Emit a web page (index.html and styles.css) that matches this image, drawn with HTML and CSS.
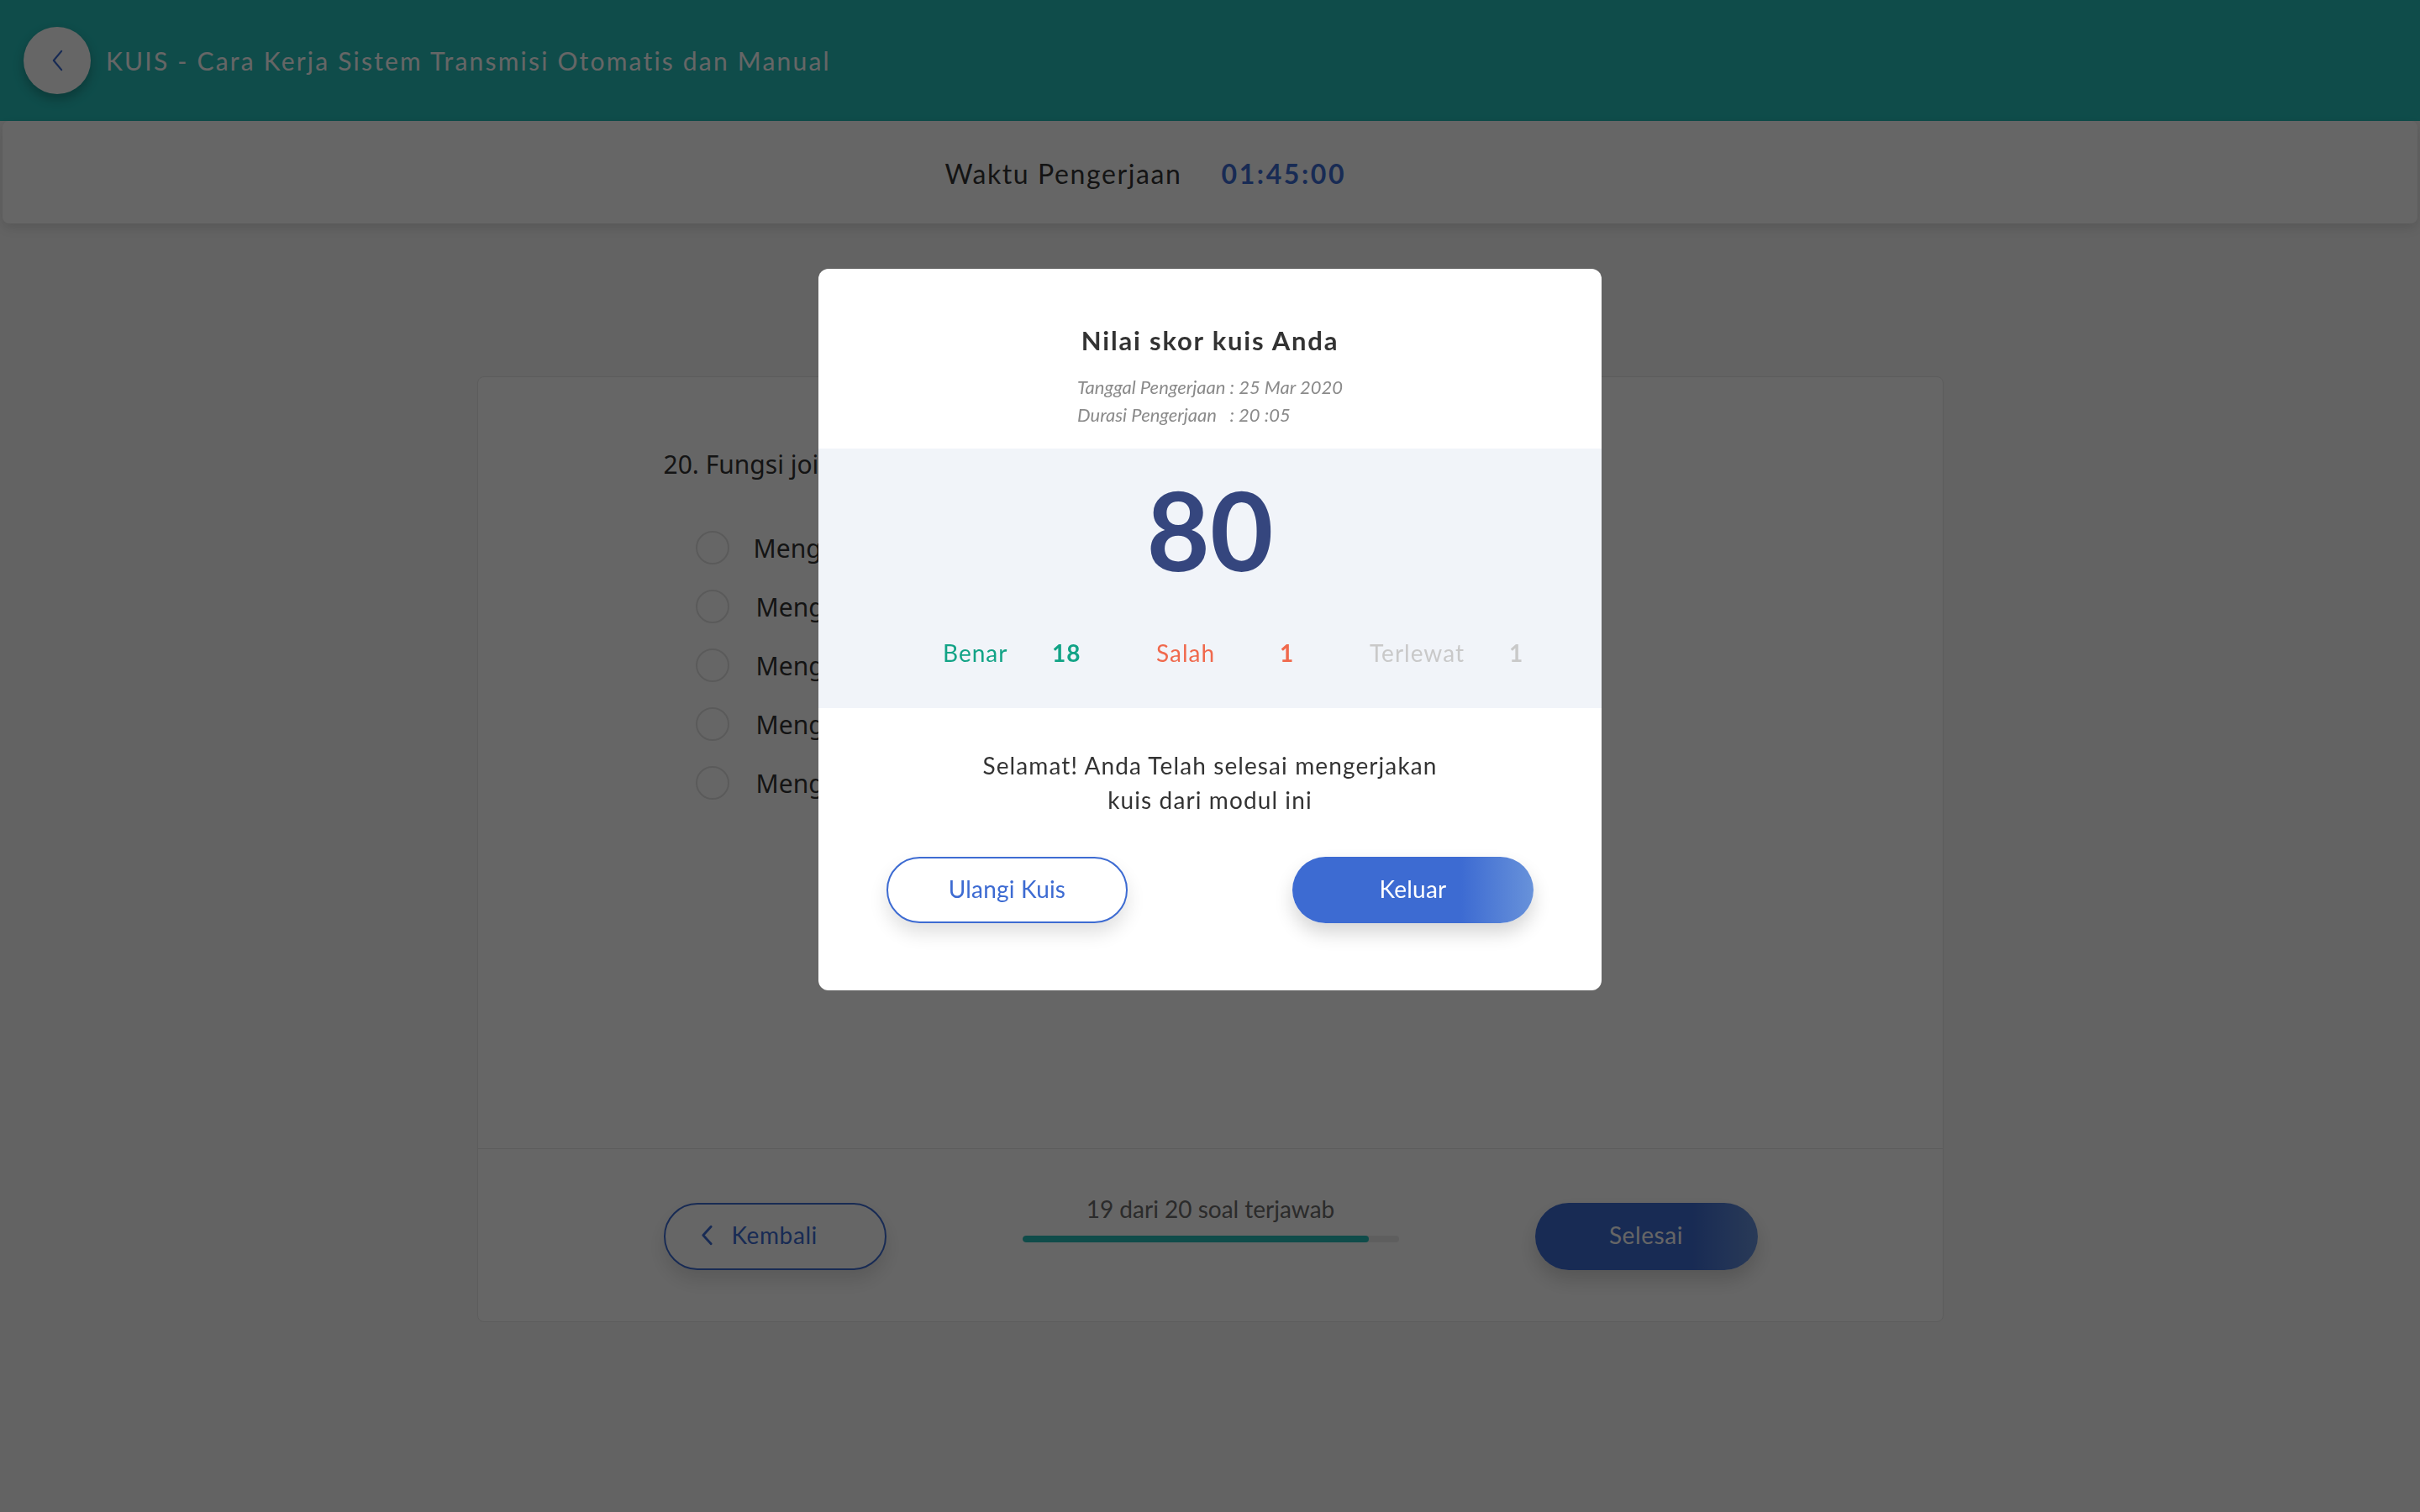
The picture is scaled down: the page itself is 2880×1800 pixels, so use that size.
FILE: index.html
```html
<!DOCTYPE html>
<html lang="id">
<head>
<meta charset="utf-8">
<title>KUIS - Cara Kerja Sistem Transmisi Otomatis dan Manual</title>
<link rel="stylesheet" href="styles.css">
</head>
<body>
<div class="page">
  <header class="topbar">
    <button class="back-circle" aria-label="Kembali">
      <svg viewBox="0 0 16 28" width="16" height="28"><path d="M13 2 L3 14 L13 26" fill="none" stroke="currentColor" stroke-width="2.4" stroke-linecap="round" stroke-linejoin="round"/></svg>
    </button>
    <h1 class="topbar-title">KUIS - Cara Kerja Sistem Transmisi Otomatis dan Manual</h1>
  </header>

  <div class="timer-card">
    <span class="timer-label">Waktu Pengerjaan</span>
    <span class="timer-value">01:45:00</span>
  </div>

  <main class="content">
    <section class="quiz-card">
      <div class="quiz-body">
        <p class="question">20. Fungsi joint universal adalah</p>
        <ul class="options">
          <li class="option"><span class="radio"></span><span class="option-text first">Mengubah sudut</span></li>
          <li class="option"><span class="radio"></span><span class="option-text">Menghubungkan</span></li>
          <li class="option"><span class="radio"></span><span class="option-text">Menggerakkan</span></li>
          <li class="option"><span class="radio"></span><span class="option-text">Mengatur poros</span></li>
          <li class="option"><span class="radio"></span><span class="option-text">Mengurangi</span></li>
        </ul>
      </div>
      <div class="quiz-footer">
        <button class="btn btn-outline btn-back">
          <svg class="btn-chevron" viewBox="0 0 16 26" width="16" height="26"><path d="M13 2 L3 13 L13 24" fill="none" stroke="currentColor" stroke-width="3" stroke-linecap="round" stroke-linejoin="round"/></svg>
          <span>Kembali</span>
        </button>
        <div class="progress">
          <span class="progress-text">19 dari 20 soal terjawab</span>
          <div class="progress-track"><div class="progress-fill" style="width:92%"></div></div>
        </div>
        <button class="btn btn-solid">Selesai</button>
      </div>
    </section>
  </main>
</div>

<div class="overlay">
  <div class="modal">
    <div class="modal-head">
      <h2 class="modal-title">Nilai skor kuis Anda</h2>
      <div class="meta">
        <p>Tanggal Pengerjaan : 25 Mar 2020</p>
        <p>Durasi Pengerjaan   : 20 :05</p>
      </div>
    </div>
    <div class="score-band">
      <div class="score">80</div>
      <div class="stats">
        <div class="stat stat-benar"><span class="stat-label">Benar</span><b class="stat-num">18</b></div>
        <div class="stat stat-salah"><span class="stat-label">Salah</span><b class="stat-num">1</b></div>
        <div class="stat stat-skip"><span class="stat-label">Terlewat</span><b class="stat-num">1</b></div>
      </div>
    </div>
    <div class="modal-foot">
      <p class="modal-msg">Selamat! Anda Telah selesai mengerjakan<br>kuis dari modul ini</p>
      <div class="actions">
        <button class="btn btn-outline modal-btn">Ulangi Kuis</button>
        <button class="btn btn-solid modal-btn">Keluar</button>
      </div>
    </div>
  </div>
</div>
</body>
</html>
```

FILE: styles.css
```css
* { box-sizing: border-box; }
html, body { margin: 0; padding: 0; }
body {
  background: #f7f7f7;
  font-family: Lato, "Open Sans", sans-serif;
  color: #333;
  min-height: 1800px;
}

/* top bar */
.topbar {
  height: 144px;
  background: #26beb9;
  display: flex;
  align-items: center;
  padding-left: 28px;
  gap: 18px;
}
.back-circle {
  width: 80px;
  height: 80px;
  border-radius: 50%;
  background: #fff;
  border: none;
  padding: 0;
  display: flex;
  align-items: center;
  justify-content: center;
  color: #3d6bd2;
  box-shadow: 0 6px 14px rgba(0, 0, 0, 0.25);
}
.back-circle svg { width: 15px; height: 26px; }
.topbar-title {
  margin: 0;
  font-weight: 400;
  font-size: 30px;
  letter-spacing: 2.2px;
  color: #fff;
}

/* timer */
.timer-card {
  margin: 0 3px;
  height: 122px;
  background: #fff;
  border-radius: 8px;
  box-shadow: 0 5px 14px rgba(0, 0, 0, 0.12);
  display: grid;
  grid-template-columns: 1fr 1fr;
  column-gap: 47px;
  align-items: center;
  padding-right: 20px;
  padding-top: 3px;
}
.timer-label {
  justify-self: end;
  font-size: 32px;
  letter-spacing: 1.6px;
  color: #333;
}
.timer-value {
  font-size: 32px;
  font-weight: 700;
  letter-spacing: 2.6px;
  color: #3d6bd2;
}

/* quiz card */
.content { padding-top: 182px; }
.quiz-card {
  width: 1745px;
  margin: 0 auto;
  background: #fff;
  border: 1px solid #e6e6e6;
  border-radius: 8px;
}
.quiz-body {
  height: 918px;
  padding: 84px 221px 0;
}
.question {
  margin: 0;
  font-family: "Noto Sans", sans-serif;
  font-size: 30px;
  line-height: 40px;
  color: #333;
}
.options {
  list-style: none;
  margin: 44px 0 0;
  padding: 0 0 0 38px;
}
.option {
  height: 70px;
  display: flex;
  align-items: center;
  gap: 32px;
  font-family: "Noto Sans", sans-serif;
  font-size: 30px;
  color: #333;
}
.option-text.first { margin-left: -3px; }
.radio {
  flex: none;
  width: 40px;
  height: 40px;
  border-radius: 50%;
  border: 2px solid #e2e2e2;
}
.quiz-footer {
  height: 206px;
  border-top: 1px solid #e6e6e6;
  display: flex;
  align-items: center;
  justify-content: space-between;
  padding: 2px 220px 0 221px;
}
.progress {
  display: flex;
  flex-direction: column;
  align-items: center;
  padding-bottom: 44px;
}
.progress-text {
  font-size: 28px;
  line-height: 36px;
  color: #6b6b6b;
}
.progress-track {
  width: 448px;
  height: 8px;
  margin-top: 14px;
  border-radius: 4px;
  background: #ebebeb;
  overflow: hidden;
}
.progress-fill {
  height: 100%;
  border-radius: 4px;
  background: #26beb9;
}

/* buttons */
.btn {
  width: 265px;
  height: 80px;
  border-radius: 40px;
  font-family: Lato, "Open Sans", sans-serif;
  font-size: 28px;
  font-weight: 400;
  letter-spacing: 0.6px;
  display: flex;
  align-items: center;
  justify-content: center;
  padding: 0 0 3px;
}
.btn-outline {
  background: #fff;
  border: 2px solid #3d6bd2;
  color: #3d6bd2;
  box-shadow: 0 12px 22px rgba(0, 0, 0, 0.12);
}
.btn-solid {
  border: none;
  color: #fff;
  background: linear-gradient(90deg, #3d6bd2 0%, #3d6bd2 70%, #6892da 100%);
  box-shadow: 0 12px 22px rgba(0, 0, 0, 0.16);
}
.btn-back {
  justify-content: flex-start;
  padding-left: 42px;
  gap: 22px;
}
.btn-chevron { width: 15px; height: 25px; }

/* overlay + modal */
.overlay {
  position: fixed;
  inset: 0;
  background: rgba(0, 0, 0, 0.6);
  display: flex;
  justify-content: center;
  align-items: flex-start;
  padding-top: 320px;
}
.modal {
  width: 932px;
  background: #fff;
  border-radius: 12px;
  overflow: hidden;
}
.modal-head {
  padding: 65px 0 24px;
  text-align: center;
}
.modal-title {
  margin: 0;
  font-size: 31px;
  line-height: 40px;
  font-weight: 700;
  letter-spacing: 1.8px;
  color: #333;
}
.meta {
  width: fit-content;
  margin: 19px auto 0;
  text-align: left;
  font-size: 22px;
  line-height: 33px;
  font-style: italic;
  color: #8a8a8a;
}
.meta p { margin: 0; white-space: pre; }
.score-band {
  background: #f1f4f9;
  padding: 31px 0 46px;
}
.score {
  text-align: center;
  font-size: 130px;
  line-height: 130px;
  font-weight: 700;
  color: #35467e;
}
.stats {
  display: grid;
  grid-template-columns: repeat(3, 254px);
  padding-left: 148px;
  margin-top: 62px;
  font-size: 28px;
  line-height: 40px;
  letter-spacing: 1px;
}
.stat { display: flex; }
.stat-num { font-weight: 700; }
.stat-benar { color: #12a386; }
.stat-benar .stat-label { width: 130px; }
.stat-salah { color: #f0694d; }
.stat-salah .stat-label { width: 147px; }
.stat-skip { color: #c9c9c9; }
.stat-skip .stat-label { width: 166px; }
.modal-foot {
  padding: 48px 81px 80px;
  text-align: center;
}
.modal-msg {
  margin: 0;
  font-size: 28px;
  line-height: 41px;
  letter-spacing: 1.1px;
  color: #333;
}
.actions {
  display: flex;
  justify-content: space-between;
  margin-top: 47px;
}
.modal-btn { width: 287px; height: 79px; letter-spacing: 0.2px; }
```
